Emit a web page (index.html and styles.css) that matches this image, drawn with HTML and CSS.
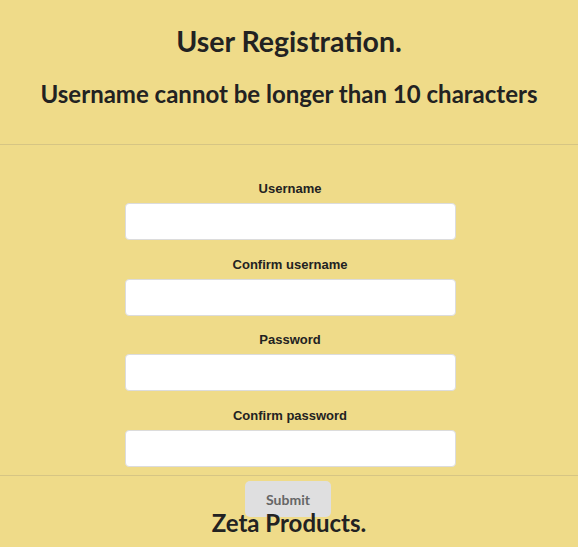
FILE: index.html
```html
<!DOCTYPE html>
<html lang="en">
<head>
<meta charset="utf-8">
<title>User Registration</title>
<link rel="stylesheet" href="styles.css">
</head>
<body>
<header class="page-header">
  <h1 class="title">User Registration.</h1>
  <h2 class="subtitle">Username cannot be longer than 10 characters</h2>
</header>
<main class="form-area">
  <form class="reg-form">
    <label class="field-label" for="u">Username</label>
    <input class="field-input" id="u" type="text">
    <label class="field-label" for="cu">Confirm username</label>
    <input class="field-input" id="cu" type="text">
    <label class="field-label" for="p">Password</label>
    <input class="field-input" id="p" type="password">
    <label class="field-label" for="cp">Confirm password</label>
    <input class="field-input" id="cp" type="password">
    <button class="submit-btn" type="button">Submit</button>
  </form>
</main>
<footer class="page-footer">
  <h2 class="footer-title">Zeta Products.</h2>
</footer>
</body>
</html>
```

FILE: styles.css
```css
html, body {
  margin: 0;
  padding: 0;
  background: #efdb89;
  color: #222;
}
body {
  font-family: "Lato", "Liberation Sans", sans-serif;
  height: 547px;
  overflow: hidden;
}
.page-header {
  padding: 23px 0 32px;
  text-align: center;
  border-bottom: 1px solid #d6c584;
}
.title {
  margin: 0;
  font-size: 28.5px;
  line-height: 36px;
  font-weight: 700;
}
.subtitle {
  margin: 17px 0 0;
  font-size: 24px;
  line-height: 36px;
  font-weight: 700;
}
.form-area {
  height: 330px;
}
.reg-form {
  display: flex;
  flex-direction: column;
  align-items: center;
  padding-top: 35px;
  padding-left: 2px;
}
.field-label {
  font-family: "Liberation Sans", Arial, sans-serif;
  font-weight: 700;
  font-size: 13px;
  line-height: 17px;
  margin-bottom: 6px;
}
.field-input {
  box-sizing: border-box;
  width: 331px;
  height: 37px;
  margin: 0 0 15.67px;
  border: 1px solid #dcdcdc;
  border-radius: 4px;
  background: #fff;
  padding: 0 10px;
  font-size: 14px;
}
.field-input:last-of-type {
  margin-bottom: 0;
}
.submit-btn {
  margin: 14px 0 0 -4px;
  width: 86px;
  height: 36px;
  border: none;
  border-radius: 5px;
  background: #dfdfe0;
  color: #666;
  font-family: "Lato", sans-serif;
  font-weight: 700;
  font-size: 14px;
  padding: 2px 0 0;
  position: relative;
  z-index: 0;
}
.page-footer {
  border-top: 1px solid #d6c584;
  text-align: center;
  position: relative;
  z-index: 1;
}
.footer-title {
  margin: 0;
  padding-top: 29px;
  font-size: 24px;
  line-height: 36px;
  font-weight: 700;
}
```
